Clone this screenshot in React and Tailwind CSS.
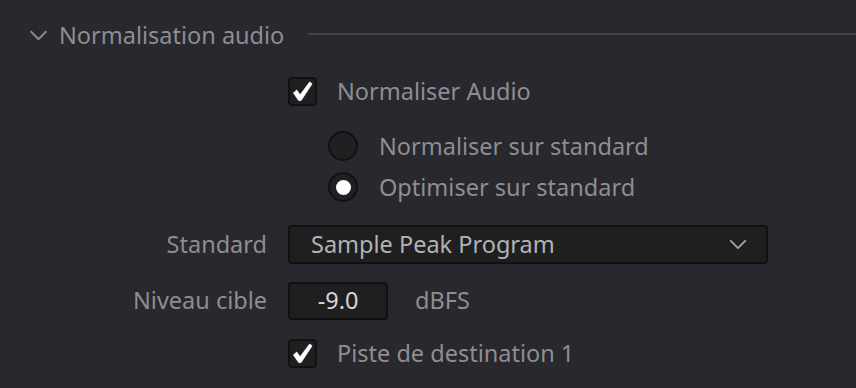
function Chevron({ className }) {
  return (
    <svg viewBox="0 0 20 12" className={className} fill="none">
      <path d="M2 2l8 8 8-8" stroke="currentColor" strokeWidth="2.2" strokeLinecap="round" strokeLinejoin="round" />
    </svg>
  );
}

function Checkbox() {
  return (
    <div className="w-[29px] h-[29px] rounded-[4px] bg-[#1f1f20] border-2 border-[#121214] flex items-center justify-center shrink-0">
      <svg viewBox="0 0 22 22" className="w-[21px] h-[21px]">
        <path
          d="M1.5 12.5 L5 9.5 L8.5 14.5 L18.5 1 L21 3 L9.5 20.5 L7 20.5 Z"
          fill="white"
          stroke="white"
          strokeWidth="0.8"
          strokeLinejoin="round"
        />
      </svg>
    </div>
  );
}

function Radio({ checked }) {
  return (
    <div className="w-[30px] h-[30px] rounded-full bg-[#202022] border-2 border-[#111113] flex items-center justify-center shrink-0">
      {checked && <div className="w-[15px] h-[15px] rounded-full bg-white" />}
    </div>
  );
}

export default function App() {
  return (
    <div
      className="w-[856px] h-[388px] bg-[#28282e] overflow-hidden text-[23.5px] text-[#8e8e91]"
      style={{ fontFamily: '"Noto Sans", "Open Sans", sans-serif' }}
    >
      {/* Section header */}
      <div className="h-[70px] flex items-center pl-[29px]">
        <Chevron className="w-[19px] h-[11px] text-[#86868a] mt-[1px]" />
        <span className="ml-[11px] leading-none mt-[2px]">Normalisation audio</span>
        <div className="flex-1 h-[2px] bg-[#414147] ml-[24px] -mt-[2px]" />
      </div>

      <div className="flex flex-col">
        <div className="mt-[7px] h-[29px] flex items-center pl-[288px]">
          <Checkbox />
          <span className="ml-[20px] mt-[1px]">Normaliser Audio</span>
        </div>

        <div className="mt-[25px] h-[30px] flex items-center pl-[328px]">
          <Radio />
          <span className="ml-[21px] mt-[1px]">Normaliser sur standard</span>
        </div>

        <div className="mt-[11px] h-[30px] flex items-center pl-[328px]">
          <Radio checked />
          <span className="ml-[21px] mt-[1px]">Optimiser sur standard</span>
        </div>

        <div className="mt-[23px] h-[39px] flex items-center">
          <span className="w-[267px] text-right">Standard</span>
          <div className="ml-[21px] w-[480px] h-full rounded-[4px] bg-[#1f1f20] border-2 border-[#111113] flex items-center pl-[21px] pr-[19px] text-[#b2b2b4]">
            <span className="flex-1">Sample Peak Program</span>
            <Chevron className="w-[18px] h-[11px] text-[#a0a0a3]" />
          </div>
        </div>

        <div className="mt-[18px] h-[38px] flex items-center">
          <span className="w-[267px] text-right">Niveau cible</span>
          <div className="ml-[21px] w-[100px] h-full rounded-[4px] bg-[#1f1f20] border-2 border-[#111113] flex items-center justify-center text-[#d6d6d8]">
            -9.0
          </div>
          <span className="ml-[27px]">dBFS</span>
        </div>

        <div className="mt-[19px] h-[29px] flex items-center pl-[288px]">
          <Checkbox />
          <span className="ml-[20px]">Piste de destination 1</span>
        </div>
      </div>
    </div>
  );
}
